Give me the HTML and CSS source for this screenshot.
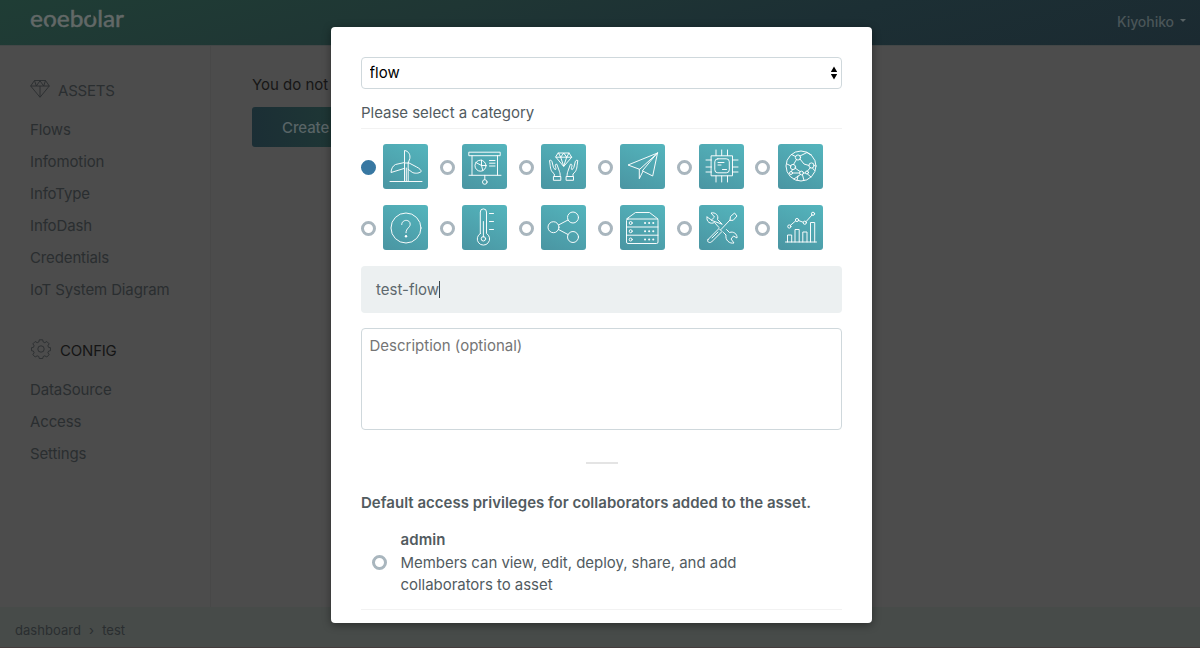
FILE: index.html
```html
<!DOCTYPE html>
<html lang="en">
<head>
<meta charset="utf-8">
<title>enebular</title>
<link rel="stylesheet" href="styles.css">
</head>
<body>
<div class="page">
  <header class="topbar">
    <svg class="logo" width="110" height="32" viewBox="0 0 110 32" role="img" aria-label="enebular">
      <text class="logo-text" x="0" y="23" textLength="94" lengthAdjust="spacingAndGlyphs">eoebolar</text>
      <path class="logo-gap" d="M20 19v6M62.300 8v6.500"/>
    </svg>
    <div class="user">Kiyohiko<span class="caret-down"></span></div>
  </header>
  <div class="body">
    <nav class="sidebar">
      <div class="group-title">
        <svg class="gem" width="20" height="20" viewBox="0 0 20 20"><path d="M4.500 1.500h11L19.300 7 10 18.300.7 7zM.7 7h18.600M4.500 1.500 6.300 7M15.500 1.500 13.700 7 10 1.800 6.300 7M10 7v11"/></svg>
        <span>ASSETS</span>
      </div>
      <ul class="links">
        <li>Flows</li><li>Infomotion</li><li>InfoType</li><li>InfoDash</li><li>Credentials</li><li>IoT System Diagram</li>
      </ul>
      <div class="group-title config">
        <svg class="gear" width="20" height="20" viewBox="0 0 20 20"><path d="M8.300.8h3.400l.5 2.200 1.600.7 2-1.200 2.300 2.300-1.200 2 .7 1.600 2 .4v2.800l-2 .5-.7 1.600 1.200 2-2.300 2.300-2-1.200-1.600.7-.5 2H8.300l-.5-2-1.600-.7-2 1.200-2.300-2.300 1.200-2-.7-1.600-2-.5V8.800l2-.4.7-1.600-1.200-2 2.300-2.300 2 1.200 1.600-.7z"/><circle cx="10" cy="10" r="3.200"/></svg>
        <span>CONFIG</span>
      </div>
      <ul class="links">
        <li>DataSource</li><li>Access</li><li>Settings</li>
      </ul>
    </nav>
    <main class="main">
      <p class="empty">You do not</p>
      <div class="create">Create</div>
    </main>
  </div>
  <footer class="crumbs"><span>dashboard</span><span class="sep">›</span><span>test</span></footer>
</div>

<div class="overlay">
<form class="modal">
  <div class="select-wrap">
    <select class="select"><option>flow</option></select>
    <svg class="arrows" width="8" height="14" viewBox="0 0 8 14"><path d="M4 .5 7.200 6H.8zM.8 8h6.400L4 13.500z"/></svg>
  </div>
  <div class="label">Please select a category</div>
  <div class="grid">
    <label class="cat"><input type="radio" name="cat" checked><svg class="tile" viewBox="0 0 45 45"><path d="M7 37.500h32M21.500 37V19h3.700v18M21.500 18V6.500c4.300.5 6 4.500 5.300 8l-1.600 4.500M23.300 24v13M21.500 18.500 12.500 20.500C9.500 22 8.300 25 8 28.500l13-4M25.200 18.500l8.500 4.500c3 1.500 4.500 3.200 4.500 4.500-2.500 2.300-7 2-9 .8l-4-3"/></svg></label>
    <label class="cat"><input type="radio" name="cat"><svg class="tile" viewBox="0 0 45 45"><path d="M7.200 8.200h31v3.500h-31zM10 11.700V31M35.500 11.700V31M7 31.300h32M22.800 31.300v4.200M27.500 16.500h5.500M27.500 19.200h5.500M27.500 22h5.500"/><circle cx="18.500" cy="21.700" r="5.500"/><path d="M19.500 16v5.500h4.500M19.500 21.500l1.300 5M19.500 21.500l-5.700-3"/><circle cx="22.800" cy="38" r="2.300"/></svg></label>
    <label class="cat"><input type="radio" name="cat"><svg class="tile" viewBox="0 0 45 45"><path d="M17.500 9h10.500l2.700 4.200-8 9.300-7.800-9.300zM15 13.200h15.700M17.500 9l2.200 4.200 3-4.200 3 4.200L28 9M19.700 13.200l3 9 3-9M12.800 32.500h7v3.800h-7zM25.500 32.500h7v3.800h-7zM13.300 32.500V30C9.500 27 9.500 24 9 20l-.5-3.500c1.400-.8 2.400.3 2.600 1.500l1.300 5.300 1.800 2.500c1-.5.8-1.800.2-3.500-.3-1.500.3-2.500 1.500-2l2.500 7c.8 2 .8 3.500.8 5.200M32 32.500V30c3.800-3 3.800-6 4.300-10l.5-3.500c-1.400-.8-2.400.3-2.600 1.500l-1.300 5.300-1.800 2.500c-1-.5-.8-1.800-.2-3.500.3-1.500-.3-2.500-1.500-2l-2.500 7c-.8 2-.8 3.500-.8 5.200"/></svg></label>
    <label class="cat"><input type="radio" name="cat"><svg class="tile" viewBox="0 0 45 45"><path d="M37.500 9 8 21l11.300 4.200zM37.500 9 32.700 32l-10-5zM19.300 25.200v9.500l3.700-7.500"/></svg></label>
    <label class="cat"><input type="radio" name="cat"><svg class="tile" viewBox="0 0 45 45"><path d="M12.500 11.800h21v20h-21z"/><rect x="15.800" y="14.800" width="14.500" height="14" rx="3"/><path d="M19 18.500h6M19 21h3M23.500 25.500h4M17 6v5.500M22.700 6v5.500M28.500 6v5.500M17 32v6M22.700 32v6M28.500 32v6M7 16h5.500M7 23h5.500M7 28h5.500M33.500 16h5.500M33.500 23h5.500M33.500 28h5.500"/></svg></label>
    <label class="cat"><input type="radio" name="cat"><svg class="tile" viewBox="0 0 45 45"><circle cx="23" cy="22" r="15"/><circle cx="20" cy="13.500" r="2.600"/><circle cx="15" cy="23" r="2.600"/><circle cx="33.500" cy="21.500" r="2.600"/><circle cx="23.500" cy="29" r="1.900"/><circle cx="29" cy="28.500" r="1.500"/><circle cx="13" cy="29" r="1.500"/><path d="m13.500 10.500 4 2M22 12l7-3.500 4.500 2.500M18.500 15.500l-3 5M22 15l4 5 5 1.500M9 20l4 2M17 24l5 3.500M14.500 25.500 13.500 27.500M14.500 29l7 0M32.500 23.500l-3 3.500M25.500 29h2M34.500 24l2 2.500M24.500 31l1.500 5.500M22.500 30.500l-6.500 4.500M29.500 30l3.500 3M20 32l-1 4.500"/></svg></label>
    <label class="cat"><input type="radio" name="cat"><svg class="tile" viewBox="0 0 45 45"><circle cx="23" cy="23" r="15"/><path d="M18.700 19.500c0-5.500 8.500-5.500 8.500-.3 0 3.500-4.200 3.800-4.200 8.500"/><circle class="dot" cx="23" cy="31.300" r="1.200"/></svg></label>
    <label class="cat"><input type="radio" name="cat"><svg class="tile" viewBox="0 0 45 45"><path d="M18.300 28.500V7a3.100 3.100 0 0 1 6.200 0v21.500a6.200 6.200 0 1 1-6.200 0zM21.400 16.500V32M27.500 8.500h4M27.500 16.500h4M27.500 24.500h4"/><circle cx="21.400" cy="33.800" r="2.200"/></svg></label>
    <label class="cat"><input type="radio" name="cat"><svg class="tile" viewBox="0 0 45 45"><circle cx="12.500" cy="22.200" r="5.500"/><circle cx="32" cy="12.500" r="5.500"/><circle cx="32" cy="32" r="5.500"/><path d="m17.500 20 9.500-5M17.500 24.500l9.500 5"/></svg></label>
    <label class="cat"><input type="radio" name="cat"><svg class="tile" viewBox="0 0 45 45"><path d="m6.500 14 9-6.500h14l8.500 6.500"/><rect x="6.500" y="14" width="31.500" height="24.500" rx="1.500"/><path d="M6.500 22h31.500M6.500 30.200h31.500"/><circle cx="10.700" cy="18" r="1.500"/><circle cx="10.700" cy="26.200" r="1.500"/><circle cx="10.700" cy="34.500" r="1.500"/><path class="leds" d="M25 18h9M25 26.200h9M25 34.500h9"/></svg></label>
    <label class="cat"><input type="radio" name="cat"><svg class="tile" viewBox="0 0 45 45"><path d="M8 12c-1 5 3.500 7.500 7.500 5.500l4.500 5M23 19l-4.500-4.500c1.500-4-2-7.500-6.500-6.500l3.500 4-3 3zM8 12l4.500 3M24.500 27.500l2.500 2.500c-1 5 3.500 9 8 8l-3-4 2.500-3 3.500 2c.5-4-3.500-7-7.500-5.500L27.500 24.500M9 34.500 20 23.500l3 3L12.500 37c-2.500 1.500-5-.5-3.500-2.500zM22 24.500l9-9.500M31 15l.5-3.500L35.500 8l2.500 3-3.500 4zM13 33l6-6"/></svg></label>
    <label class="cat"><input type="radio" name="cat"><svg class="tile" viewBox="0 0 45 45"><path d="M7.500 37h31M9.500 37v-7h4.200v7M17 37V24.500h4.200V37M24.800 37V27H29v10M32.500 37V17.500h4.200V37M12.500 20.300l5-4.300M20.500 15.500l4.500 1.700M28.200 16.500l5.800-6.500"/><circle cx="11.300" cy="21.500" r="1.600"/><circle cx="19" cy="15" r="1.600"/><circle cx="26.800" cy="17.700" r="1.600"/><circle cx="35" cy="8.800" r="1.600"/></svg></label>
  </div>
  <div class="name"><span>test-flow</span><i class="cursor"></i></div>
  <textarea class="desc" placeholder="Description (optional)"></textarea>
  <div class="short-rule"></div>
  <h4 class="heading">Default access privileges for collaborators added to the asset.</h4>
  <label class="role">
    <input type="radio" name="role">
    <span class="role-text"><b>admin</b><br>Members can view, edit, deploy, share, and add<br>collaborators to asset</span>
  </label>
</form>
</div>
</body>
</html>
```
FILE: styles.css
```css
* { box-sizing: border-box; }
body { margin: 0; height: 648px; overflow: hidden; font-family: Inter, "Liberation Sans", sans-serif; font-size: 15px; background: #4c4c4c; }
.page { height: 648px; display: flex; flex-direction: column; color: #2a2e30; }
.topbar { height: 46px; flex: none; padding: 4px 14px 0 30px; display: flex; justify-content: space-between; background: linear-gradient(165deg, #1f3d35 0%, #1f3634 35%, #1c2f34 65%, #1b2a31 100%); border-bottom: 1px solid #434747; }
.logo-text { font: 400 23px Lato, sans-serif; fill: #626867; stroke: #626867; stroke-width: .5; }
.logo-gap { stroke: #1f3934; stroke-width: 2.500; fill: none; }
.user { display: flex; align-items: center; height: 35px; font-size: 14px; font-weight: 500; letter-spacing: -.05px; color: #4a5558; }
.caret-down { margin: -3px 0 0 6px; border: 3.500px solid transparent; border-top-color: #596365; border-bottom: 0; }
.body { flex: 1; display: flex; }
.sidebar { width: 211px; border-right: 1px solid #484848; padding: 33px 0 0 30px; }
.group-title { display: flex; align-items: center; height: 22px; gap: 8px; color: #2a2e30; letter-spacing: -.2px; }
.group-title span { padding-top: 1px; }
.gem, .gear { fill: none; stroke: #2a2e30; stroke-width: .9; margin-top: -2px; }
.config { margin-top: 33px; color: #151515; gap: 9px; padding-left: 1px; }
.links { list-style: none; margin: 13px 0 0; padding: 0; letter-spacing: -.13px; }
.links li { height: 32px; line-height: 32px; }
.main { padding: 28px 0 0 41px; }
.empty { margin: 0 0 11px; line-height: 22px; color: #161616; }
.create { width: 200px; height: 40px; line-height: 41px; padding-left: 30px; border-radius: 3px; color: #596466; font-weight: 500; letter-spacing: -.1px; background: linear-gradient(80deg, #1b2e35, #1f3935 55%); }
.crumbs { height: 41px; flex: none; display: flex; align-items: center; gap: 8px; padding: 5px 15px 0; background: #474b49; border-bottom: 1px solid #443c3c; font-size: 13px; letter-spacing: .05px; }

.overlay { position: absolute; inset: 0; display: flex; justify-content: center; align-items: flex-start; padding: 27px 0 0 3px; }
.modal { width: 541px; height: 596px; overflow: hidden; padding: 30px; background: #fff; border-radius: 4px; box-shadow: 0 2px 9px rgba(0,0,0,.4); color: #525b5f; display: flex; flex-direction: column; }
.select-wrap { display: flex; position: relative; flex: none; }
.select { appearance: none; width: 481px; height: 32px; border: 1px solid #cfd8dc; border-radius: 4px; background: #fff; padding: 0 7.500px 2px; font: inherit; color: #000; }
.arrows { position: absolute; right: 4px; top: 9px; fill: #000; }
.label { height: 40px; padding-top: 13px; line-height: 22px; border-bottom: 1px solid #f2f2f2; letter-spacing: -.03px; flex: none; }
.grid { display: grid; grid-template-columns: repeat(6, 78.900px); grid-auto-rows: 45px; row-gap: 16px; margin-top: 15px; width: 481px; flex: none; }
.cat { display: flex; align-items: center; gap: 7.400px; }
input[type="radio"] { appearance: none; width: 15px; height: 15px; margin: 2px 0 0; border: 3px solid #a9b6be; border-radius: 50%; background: #fff; flex: none; }
input[type="radio"]:checked { background: #3878a2; border-color: #3878a2; }
.tile { width: 45px; height: 45px; border-radius: 3px; background: linear-gradient(205deg, #54b5bd, #4a95a2); fill: none; stroke: #fff; stroke-opacity: .95; stroke-width: 1; stroke-linecap: round; stroke-linejoin: round; }
.dot { fill: #fff; stroke: none; }
.leds { stroke-width: 2; stroke-dasharray: .1 4; }
.name { display: flex; align-items: center; height: 47px; margin-top: 16px; padding: 0 0 0 15px; border-radius: 4px; background: #ecf0f1; color: #5d686d; flex: none; }
.cursor { width: 1px; height: 17px; background: #3c474c; }
.desc { height: 102px; margin-top: 15px; padding: 6px 7.500px; border: 1px solid #cfd8dc; border-radius: 4px; font: inherit; line-height: 22px; resize: none; flex: none; }
.desc::placeholder { color: #757575; }
.short-rule { width: 32px; height: 2px; background: #e4e4e4; margin: 32px auto 0; flex: none; }
.heading { margin: 28px 0 0; font-size: 15px; line-height: 22px; font-weight: 600; white-space: nowrap; letter-spacing: .015px; flex: none; }
.role { display: flex; align-items: center; gap: 13.500px; height: 96px; padding: 0 0 0 11px; border-bottom: 1px solid #f2f2f2; flex: none; }
.role-text { line-height: 22.500px; padding-top: 3px; letter-spacing: -.04px; }
.role b { font-weight: 600; letter-spacing: .1px; }
```
